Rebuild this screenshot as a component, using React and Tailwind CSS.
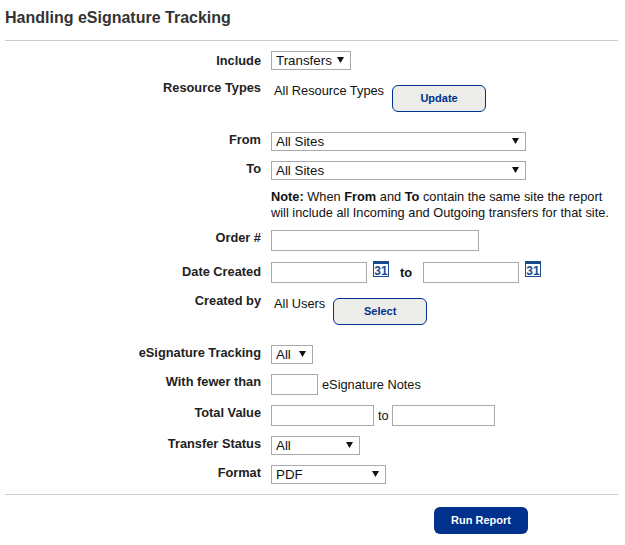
import React from "react";

const Arrow = () => (
  <svg width="7" height="6" viewBox="0 0 7 6" className="pointer-events-none absolute right-[7px] top-[6px]">
    <path d="M0 0H7L3.5 6Z" fill="#111" />
  </svg>
);

function Sel({ value, w }) {
  return (
    <div className={`relative h-[19px] ${w}`}>
      <select
        defaultValue={value}
        className="block h-[19px] w-full appearance-none rounded-none border border-[#a9a9a9] bg-white pl-[4px] text-[13.33px] leading-[17px] text-[#111] outline-none"
      >
        <option>{value}</option>
      </select>
      <Arrow />
    </div>
  );
}

function Input({ w }) {
  return <input type="text" className={`block h-[21px] ${w} border border-[#a9a9a9] bg-white outline-none`} />;
}

function Row({ label, h, mt, lt = "mt-0", children }) {
  return (
    <div className={`flex ${h} ${mt}`}>
      <label className={`w-[256px] shrink-0 text-right text-[12.8px] font-bold leading-[16px] text-[#222] ${lt}`}>{label}</label>
      <div className="ml-[10px] flex items-start">{children}</div>
    </div>
  );
}

function Cal() {
  return (
    <svg width="16" height="16" viewBox="0 0 16 16" className="ml-[6px] mt-[-1px] block shrink-0">
      <rect x="0" y="0" width="16" height="16" fill="#1a4a8f" />
      <rect x="1" y="3" width="14" height="12" fill="#fff" />
      <text x="8" y="13.5" textAnchor="middle" fontSize="12" fontWeight="700" fill="#1a4a8f" fontFamily="Liberation Sans">31</text>
    </svg>
  );
}

function Btn({ children, mt }) {
  return (
    <button
      type="button"
      className={`h-[27px] w-[94px] rounded-[6px] border border-[#00318c] bg-[#ecece8] text-[11px] font-bold text-[#00318c] ${mt}`}
    >
      {children}
    </button>
  );
}

export default function App() {
  return (
    <div className="h-[545px] w-[625px] overflow-hidden bg-white pl-[5px] pr-[7px] font-['Liberation_Sans',Arial,sans-serif] text-[12.8px] text-[#111]">
      <h1 className="pt-[9px] text-[16px] font-bold leading-[18px] text-[#333]">Handling eSignature Tracking</h1>
      <hr className="mt-[13px] border-0 border-t border-[#ccc]" />

      <Row label="Include" h="h-[19px]" mt="mt-[10px]" lt="mt-[2px]">
        <Sel value="Transfers" w="w-[80px]" />
      </Row>

      <Row label="Resource Types" h="h-[27px]" mt="mt-[15px]" lt="mt-[-5px]">
        <span className="ml-[3px] leading-[16px] mt-[-2px]">All Resource Types</span>
        <Btn mt="ml-[8px]">Update</Btn>
      </Row>

      <Row label="From" h="h-[19px]" mt="mt-[20px]">
        <Sel value="All Sites" w="w-[255px]" />
      </Row>
      <Row label="To" h="h-[19px]" mt="mt-[10px]">
        <Sel value="All Sites" w="w-[255px]" />
      </Row>

      <p className="ml-[266px] mt-[9px] text-[12.8px] leading-[16px]">
        <b>Note:</b> When <b>From</b> and <b>To</b> contain the same site the report
        <br />
        will include all Incoming and Outgoing transfers for that site.
      </p>

      <Row label="Order #" h="h-[21px]" mt="mt-[9px]">
        <Input w="w-[208px]" />
      </Row>

      <Row label="Date Created" h="h-[21px]" mt="mt-[11px]" lt="mt-[2px]">
        <Input w="w-[96px]" />
        <Cal />
        <span className="ml-[11px] mt-[3px] font-bold leading-[16px]">to</span>
        <span className="ml-[11px]"><Input w="w-[96px]" /></span>
        <Cal />
      </Row>

      <Row label="Created by" h="h-[27px]" mt="mt-[15px]" lt="mt-[-5px]">
        <span className="ml-[3px] leading-[16px] mt-[-2px]">All Users</span>
        <Btn mt="ml-[8px]">Select</Btn>
      </Row>

      <Row label="eSignature Tracking" h="h-[19px]" mt="mt-[20px]">
        <Sel value="All" w="w-[42px]" />
      </Row>

      <Row label="With fewer than" h="h-[21px]" mt="mt-[10px]">
        <Input w="w-[47px]" />
        <span className="ml-[4px] mt-[3px] leading-[16px]">eSignature Notes</span>
      </Row>

      <Row label="Total Value" h="h-[21px]" mt="mt-[10px]">
        <Input w="w-[103px]" />
        <span className="ml-[4px] mt-[3px] leading-[16px]">to</span>
        <span className="ml-[3px]"><Input w="w-[103px]" /></span>
      </Row>

      <Row label="Transfer Status" h="h-[19px]" mt="mt-[10px]">
        <Sel value="All" w="w-[89px]" />
      </Row>

      <Row label="Format" h="h-[19px]" mt="mt-[10px]">
        <Sel value="PDF" w="w-[115px]" />
      </Row>

      <hr className="mt-[10px] border-0 border-t border-[#ccc]" />

      <div className="mt-[12px] pl-[429px]">
        <button type="button" className="h-[27px] w-[94px] rounded-[6px] bg-[#00318c] text-[11px] font-bold text-white">
          Run Report
        </button>
      </div>
    </div>
  );
}
